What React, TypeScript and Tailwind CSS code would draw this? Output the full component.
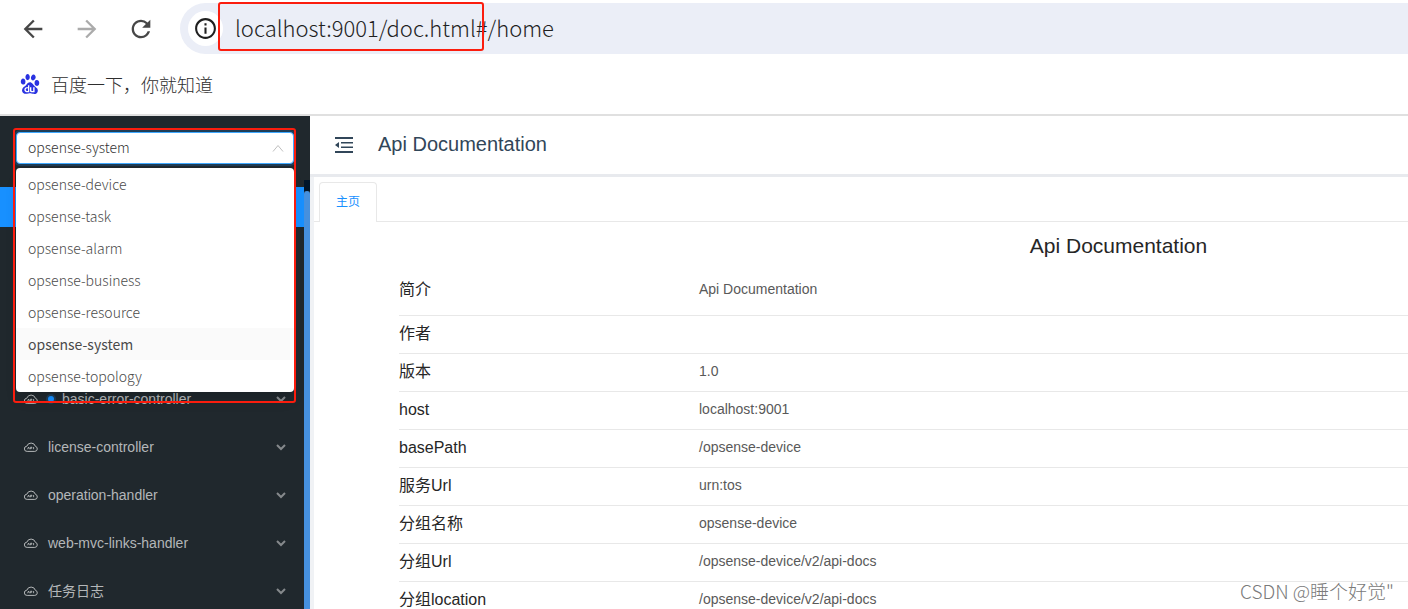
import { useState } from "react";
import { MdArrowBack, MdArrowForward, MdInfoOutline, MdRefresh } from "react-icons/md";
import { SiBaidu } from "react-icons/si";

const groups = [
  "opsense-device",
  "opsense-task",
  "opsense-alarm",
  "opsense-business",
  "opsense-resource",
  "opsense-system",
  "opsense-topology",
];

const menuItems = [
  { name: "basic-error-controller", changed: true },
  { name: "license-controller" },
  { name: "operation-handler" },
  { name: "web-mvc-links-handler" },
  { name: "任务日志" },
];

const infoRows = [
  { label: "作者", value: "" },
  { label: "版本", value: "1.0" },
  { label: "host", value: "localhost:9001" },
  { label: "basePath", value: "/opsense-device" },
  { label: "服务Url", value: "urn:tos" },
  { label: "分组名称", value: "opsense-device" },
  { label: "分组Url", value: "/opsense-device/v2/api-docs" },
  { label: "分组location", value: "/opsense-device/v2/api-docs" },
];

const CloudIcon = () => (
  <svg width="14" height="10" viewBox="0 0 14 10" fill="none" stroke="#c4c6c7" aria-hidden="true">
    <path
      d="M3.2 9.4h7.6a2.6 2.6 0 0 0 .6-5.1A4.5 4.5 0 0 0 2.8 4.2 2.6 2.6 0 0 0 3.2 9.4z"
      strokeWidth="0.9"
    />
    <path d="M3.6 7.2l1-2.2.9 2.2M6.6 7.2V5.2h1.2v1H6.8M9.6 5v2.2" strokeWidth="0.8" />
  </svg>
);

const ChevronDown = () => (
  <svg width="10" height="7" viewBox="0 0 10 7" fill="none" stroke="#85898c" strokeWidth="2" aria-hidden="true">
    <path d="M1 1l4 4 4-4" />
  </svg>
);

const MenuFoldIcon = () => (
  <svg width="18" height="16" viewBox="0 0 18 16" fill="currentColor" aria-hidden="true">
    <path d="M0 0h18v2H0zM6 5h12v1.5H6zM6 9.5h12V11H6zM0 14h18v2H0zM0 8l4-3v6z" />
  </svg>
);

const BrowserBar = () => {
  const [url, setUrl] = useState("localhost:9001/doc.html#/home");

  return (
    <header className="border-b-2 border-[#e0e0e0] bg-white">
      <div className="flex items-center pt-[3px]">
        <div className="flex w-[180px] items-center gap-[26px] pl-[19px] text-[#474747]">
          <button aria-label="Back">
            <MdArrowBack size={28} />
          </button>
          <button aria-label="Forward" className="text-[#ababab]">
            <MdArrowForward size={28} />
          </button>
          <button aria-label="Reload">
            <MdRefresh size={28} />
          </button>
        </div>
        <div className="relative flex h-[51px] flex-1 items-center rounded-l-full bg-[#ebeef7] pl-2">
          <button
            aria-label="Site information"
            className="flex size-[35px] items-center justify-center rounded-full bg-white text-[#1f1f1f]"
          >
            <MdInfoOutline size={25} />
          </button>
          <input
            aria-label="Address"
            value={url}
            onChange={(e) => setUrl(e.target.value)}
            className="ml-3 h-10 flex-1 bg-transparent pb-1 font-['Noto_Sans_CJK_SC',sans-serif] text-[22px] font-light text-[#1f1f1f] outline-none"
          />
          <div className="pointer-events-none absolute -top-px left-[38px] h-[49px] w-[266px] rounded-[3px] border-2 border-[#fb1d0e]" />
        </div>
      </div>
      <nav className="flex h-[60px] items-center px-5">
        <a href="#baidu" className="flex items-center gap-[11px] text-[18px] text-[#2e2e2e]">
          <SiBaidu size={20} className="text-[#2932e1]" />
          <span className="pt-1 font-light">百度一下，你就知道</span>
        </a>
      </nav>
    </header>
  );
};

const GroupSelect = () => {
  const [group, setGroup] = useState("opsense-system");

  return (
    <div className="relative mx-4 w-[278px] font-['Noto_Sans_CJK_SC',sans-serif] text-[14px] font-light">
      <select
        aria-label="Group"
        value={group}
        onChange={(e) => setGroup(e.target.value)}
        className="block h-8 w-full appearance-none rounded border border-[#40a9ff] bg-white pr-8 pb-0.5 pl-[11px] text-[#333333] shadow-[0_0_0_2px_rgba(24,144,255,0.2)] outline-none"
      >
        {groups.map((name) => (
          <option key={name}>{name}</option>
        ))}
      </select>
      <svg
        className="pointer-events-none absolute top-3 right-[10px] text-[#bfbfbf]"
        width="12"
        height="8"
        viewBox="0 0 12 8"
        fill="none"
        stroke="currentColor"
        aria-hidden="true"
      >
        <path d="M1 7.5l5-6 5 6" />
      </svg>
      <ul className="absolute top-9 z-10 w-full overflow-hidden rounded bg-white text-[#4a4a4a] shadow-lg">
        {groups.map((name) => (
          <li
            key={name}
            onClick={() => setGroup(name)}
            className={
              name === group
                ? "h-8 bg-[#fafafa] px-3 leading-8 font-normal text-[#4a4a4a]"
                : "h-8 px-3 leading-8"
            }
          >
            {name}
          </li>
        ))}
      </ul>
      <div className="pointer-events-none absolute -top-1 -left-[3px] z-20 h-[275px] w-[283px] rounded-[3px] border-2 border-[#fb1d0e]" />
    </div>
  );
};

const Sidebar = () => (
  <aside className="flex w-[310px] shrink-0 bg-[#20282d]">
    <div className="w-[304px] pt-4">
      <GroupSelect />
      <div className="mt-[23px] h-10 bg-[#1890ff]" />
      <ul className="mt-[148px] text-[14px] text-[#b4b7b9]">
        {menuItems.map((item) => (
          <li key={item.name}>
            <button className="flex h-12 w-full items-center pr-[18px] pl-6 text-left">
              <CloudIcon />
              {item.changed && (
                <span className="ml-[10px] size-[6px] rounded-full bg-[#1890ff] ring-2 ring-[#1890ff]/20" />
              )}
              <span className={item.changed ? "ml-2 flex-1" : "ml-[10px] flex-1"}>{item.name}</span>
              <ChevronDown />
            </button>
          </li>
        ))}
      </ul>
    </div>
    <div className="flex w-[6px] flex-col pt-16">
      <div className="h-[11px] bg-[#001529]" />
      <div className="flex-1 rounded-t-full bg-[#4690de]" />
    </div>
  </aside>
);

const Home = () => (
  <section className="min-w-[1529px] pr-[5px] pl-[85px]">
    <h2 className="pt-2 text-center text-[21px] leading-8 text-[#262626]">Api Documentation</h2>
    <table className="mt-[9px] w-full text-left">
      <tbody>
        <tr className="h-11 border-b border-[#e8e8e8] align-top">
          <th className="w-[300px] pt-[7px] text-[16px] leading-6 font-normal text-[#262626]">简介</th>
          <td className="pt-[6px] text-[14px] leading-6 text-[#595959]">Api Documentation</td>
        </tr>
        {infoRows.map((row) => (
          <tr key={row.label} className="h-[38px] border-b border-[#e8e8e8]">
            <th className="text-[16px] leading-6 font-normal text-[#262626]">{row.label}</th>
            <td className="pb-0.5 text-[14px] leading-6 text-[#595959]">{row.value}</td>
          </tr>
        ))}
      </tbody>
    </table>
  </section>
);

const App = () => {
  return (
    <div className="relative flex h-screen flex-col overflow-hidden bg-white font-['Liberation_Sans','Noto_Sans_CJK_SC',sans-serif]">
      <BrowserBar />
      <div className="flex min-h-0 flex-1">
        <Sidebar />
        <main className="min-w-0 flex-1 overflow-hidden">
          <div className="flex h-[61px] items-center gap-[25px] border-b-[3px] border-[#e8eaee] pl-[25px] text-[#314659]">
            <button aria-label="Collapse menu">
              <MenuFoldIcon />
            </button>
            <h1 className="pb-0.5 text-[20px] leading-7">Api Documentation</h1>
          </div>
          <div className="border-l-4 border-[#f0f2f5] pt-[5px]">
            <div className="flex border-b border-[#e8e8e8] pl-[5px]">
              <button className="-mb-px h-10 rounded-t border border-b-0 border-[#e8e8e8] bg-white px-4 pb-0.5 text-[12px] text-[#1890ff]">
                主页
              </button>
            </div>
            <Home />
          </div>
        </main>
      </div>
      <p className="pointer-events-none absolute right-[14px] bottom-1 font-['Noto_Sans_CJK_SC',sans-serif] text-[19px] leading-7 font-light text-[#7a7a7a]">
        CSDN @睡个好觉"
      </p>
    </div>
  );
};

export default App;
